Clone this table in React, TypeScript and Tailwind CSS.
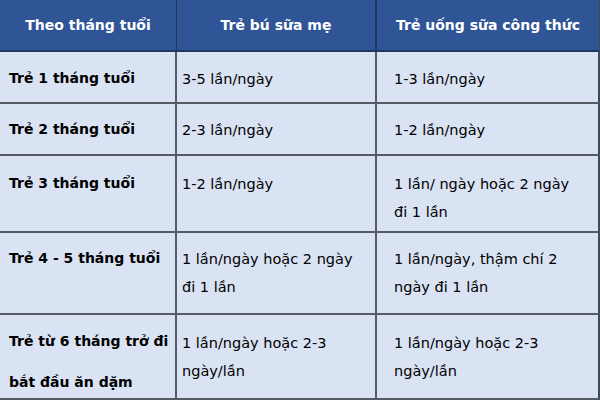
import React from "react";

const rows: { h: string; a: string[]; b: string[]; c: string[]; lhA: string; ptA: string; pt: string }[] = [
  { h: "h-[52px]", a: ["Trẻ 1 tháng tuổi"], b: ["3-5 lần/ngày"], c: ["1-3 lần/ngày"], lhA: "leading-[27px]", ptA: "pt-[13px]", pt: "pt-[13px]" },
  { h: "h-[52px]", a: ["Trẻ 2 tháng tuổi"], b: ["2-3 lần/ngày"], c: ["1-2 lần/ngày"], lhA: "leading-[27px]", ptA: "pt-[12px]", pt: "pt-[12px]" },
  { h: "h-[77px]", a: ["Trẻ 3 tháng tuổi"], b: ["1-2 lần/ngày"], c: ["1 lần/ ngày hoặc 2 ngày", "đi 1 lần"], lhA: "leading-[27px]", ptA: "pt-[14px]", pt: "pt-[14px]" },
  { h: "h-[82px]", a: ["Trẻ 4 - 5 tháng tuổi"], b: ["1 lần/ngày hoặc 2 ngày", "đi 1 lần"], c: ["1 lần/ngày, thậm chí 2", "ngày đi 1 lần"], lhA: "leading-[27px]", ptA: "pt-[12px]", pt: "pt-[12px]" },
  { h: "h-[85px]", a: ["Trẻ từ 6 tháng trở đi", "bắt đầu ăn dặm"], b: ["1 lần/ngày hoặc 2-3", "ngày/lần"], c: ["1 lần/ngày hoặc 2-3", "ngày/lần"], lhA: "leading-[41px]", ptA: "pt-[6px]", pt: "pt-[14px]" },
];

export default function App() {
  return (
    <div
      className="w-[600px] h-[400px] bg-[#dae3f3] overflow-hidden text-black"
      style={{ fontFamily: '"DejaVu Sans", sans-serif' }}
    >
      <div className="grid grid-cols-[177px_200px_222px] border-r-2 border-[#3f4a5a] w-[600px]">
        <div className="h-[52px] bg-[#2f5597] border-r border-b-2 border-[#1f3864] flex items-center justify-center text-white font-bold text-[14px]">
          Theo tháng tuổi
        </div>
        <div className="h-[52px] bg-[#2f5597] border-r-2 border-b-2 border-[#1f3864] flex items-center justify-center text-white font-bold text-[14px]">
          Trẻ bú sữa mẹ
        </div>
        <div className="h-[52px] bg-[#2f5597] border-b-2 border-[#1f3864] flex items-center justify-center text-white font-bold text-[14px]">
          Trẻ uống sữa công thức
        </div>
        {rows.map((r, i) => (
          <React.Fragment key={i}>
            <div className={`${r.h} ${r.ptA} border-r-2 border-b-2 border-[#555c66] pl-[9px] font-bold text-[14px] ${r.lhA}`}>
              {r.a.map((t, j) => (
                <div key={j}>{t}</div>
              ))}
            </div>
            <div className={`${r.h} ${r.pt} border-r-2 border-b-2 border-[#555c66] pl-[5px] text-[14.5px] leading-[28px]`}>
              {r.b.map((t, j) => (
                <div key={j}>{t}</div>
              ))}
            </div>
            <div className={`${r.h} ${r.pt} border-b-2 border-[#555c66] pl-[17px] text-[14.5px] leading-[28px]`}>
              {r.c.map((t, j) => (
                <div key={j}>{t}</div>
              ))}
            </div>
          </React.Fragment>
        ))}
      </div>
    </div>
  );
}
